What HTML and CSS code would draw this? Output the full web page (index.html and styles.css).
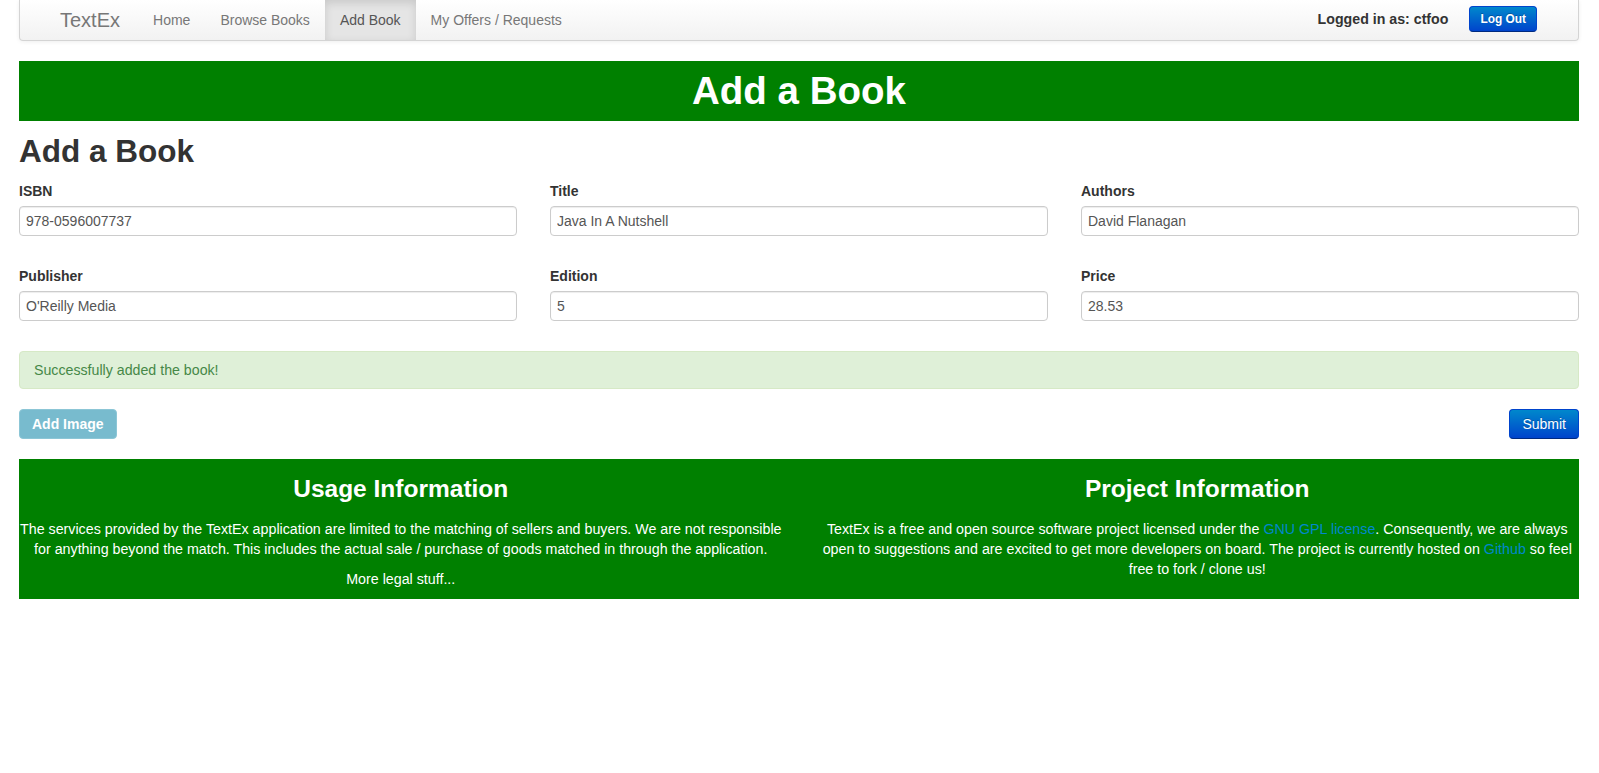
FILE: index.html
```html
<!DOCTYPE html>
<html lang="en">
<head>
<meta charset="utf-8">
<title>TextEx - Add Book</title>
<link rel="stylesheet" href="styles.css">
</head>
<body>
<div class="page">
  <nav class="navbar">
    <a class="brand" href="#">TextEx</a>
    <ul class="nav">
      <li><a href="#">Home</a></li>
      <li><a href="#">Browse Books</a></li>
      <li class="active"><a href="#">Add Book</a></li>
      <li><a href="#">My Offers / Requests</a></li>
    </ul>
    <div class="nav-right">
      <span class="user">Logged in as: ctfoo</span>
      <button class="btn btn-primary btn-small">Log Out</button>
    </div>
  </nav>

  <div class="banner"><h1>Add a Book</h1></div>

  <h2 class="page-title">Add a Book</h2>

  <form class="book-form">
    <div class="field">
      <label>ISBN</label>
      <input class="input" type="text" value="978-0596007737">
    </div>
    <div class="field">
      <label>Title</label>
      <input class="input" type="text" value="Java In A Nutshell">
    </div>
    <div class="field">
      <label>Authors</label>
      <input class="input" type="text" value="David Flanagan">
    </div>
    <div class="field">
      <label>Publisher</label>
      <input class="input" type="text" value="O'Reilly Media">
    </div>
    <div class="field">
      <label>Edition</label>
      <input class="input" type="text" value="5">
    </div>
    <div class="field">
      <label>Price</label>
      <input class="input" type="text" value="28.53">
    </div>
  </form>

  <div class="alert">Successfully added the book!</div>

  <div class="actions">
    <button class="btn btn-info disabled">Add Image</button>
    <button class="btn btn-primary">Submit</button>
  </div>

  <footer class="footer">
    <div class="footer-col">
      <h3>Usage Information</h3>
      <p>The services provided by the TextEx application are limited to the matching of sellers and buyers. We are not responsible for anything beyond the match. This includes the actual sale / purchase of goods matched in through the application.</p>
      <p>More legal stuff...</p>
    </div>
    <div class="footer-col">
      <h3>Project Information</h3>
      <p>TextEx is a free and open source software project licensed under the <a href="#">GNU GPL license</a>. Consequently, we are always open to suggestions and are excited to get more developers on board. The project is currently hosted on <a href="#">Github</a> so feel free to fork / clone us!</p>
    </div>
  </footer>
</div>
</body>
</html>
```

FILE: styles.css
```css
* { box-sizing: border-box; }

html, body {
  margin: 0;
  padding: 0;
  background: #ffffff;
}

body {
  font-family: "Liberation Sans", Arial, Helvetica, sans-serif;
  font-size: 14px;
  line-height: 20px;
  color: #333333;
}

.page {
  padding: 0 20px 0 19px;
}

/* Navbar */
.navbar {
  display: flex;
  align-items: flex-start;
  height: 41px;
  padding: 0 41px 0 21px;
  background-image: linear-gradient(to bottom, #ffffff, #f2f2f2);
  border: 1px solid #d4d4d4;
  border-top: none;
  border-radius: 0 0 4px 4px;
  box-shadow: 0 1px 4px rgba(0, 0, 0, 0.065);
  margin-bottom: 20px;
}

.brand {
  display: block;
  padding: 10px 18px 10px 19px;
  font-size: 20px;
  line-height: 20px;
  color: #777777;
  text-decoration: none;
}

.nav {
  display: flex;
  list-style: none;
  margin: 0;
  padding: 0;
}

.nav li a {
  display: block;
  padding: 10px 15px;
  line-height: 20px;
  color: #777777;
  text-decoration: none;
}

.nav li.active a {
  background-color: #e5e5e5;
  color: #555555;
  box-shadow: inset 0 3px 8px rgba(0, 0, 0, 0.125);
}

.nav-right {
  margin-left: auto;
  display: flex;
  align-items: center;
  gap: 21px;
  height: 34px;
}

.user {
  font-weight: bold;
  font-size: 14.2px;
  color: #333333;
  padding-top: 3px;
}

/* Buttons */
.btn {
  display: inline-block;
  padding: 4px 12px;
  font-family: inherit;
  font-size: 14px;
  line-height: 20px;
  color: #ffffff;
  border: 1px solid rgba(0, 0, 0, 0.1);
  border-bottom-color: rgba(0, 0, 0, 0.25);
  border-radius: 4px;
  cursor: pointer;
  text-shadow: 0 -1px 0 rgba(0, 0, 0, 0.25);
}

.btn-primary {
  background-color: #006dcc;
  background-image: linear-gradient(to bottom, #0088cc, #0044cc);
  border-color: #0044cc #0044cc #002a80;
}

.btn-small {
  padding: 2px 10px;
  font-size: 11.9px;
  font-weight: bold;
  line-height: 20px;
  margin-top: 4px;
}

.btn-info.disabled {
  background-color: #78bbce;
  border-color: #8cc6d6;
  font-weight: bold;
  text-shadow: none;
  cursor: default;
}

/* Banner */
.banner {
  background-color: #008000;
  padding: 10px 0;
  text-align: center;
}

.banner h1 {
  margin: 0;
  font-size: 38.5px;
  line-height: 40px;
  font-weight: bold;
  color: #ffffff;
}

.page-title {
  margin: 10px 0;
  font-size: 31.5px;
  line-height: 40px;
  font-weight: bold;
  color: #333333;
}

/* Form */
.book-form {
  display: grid;
  grid-template-columns: repeat(3, 1fr);
  column-gap: 33px;
  row-gap: 30px;
  margin: 0 0 30px;
}

.field label {
  display: block;
  margin-bottom: 5px;
  font-weight: bold;
  color: #333333;
}

.input {
  display: block;
  width: 100%;
  height: 30px;
  padding: 4px 6px;
  font-family: inherit;
  font-size: 14px;
  line-height: 20px;
  color: #555555;
  background: #ffffff;
  border: 1px solid #cccccc;
  border-radius: 4px;
  box-shadow: inset 0 1px 1px rgba(0, 0, 0, 0.075);
}

/* Alert */
.alert {
  padding: 8px 35px 8px 14px;
  margin-bottom: 20px;
  color: #468847;
  background-color: #dff0d8;
  border: 1px solid #d6e9c6;
  border-radius: 4px;
  font-size: 14.2px;
}

.actions {
  display: flex;
  justify-content: space-between;
  margin-bottom: 20px;
}

/* Footer */
.footer {
  display: grid;
  grid-template-columns: 1fr 1fr;
  column-gap: 33px;
  background-color: #008000;
  color: #ffffff;
  text-align: center;
}

.footer-col h3 {
  margin: 10px 0;
  font-size: 24.5px;
  line-height: 40px;
  font-weight: bold;
}

.footer-col p {
  margin: 0 0 10px;
  font-size: 14.25px;
}

.footer-col a {
  color: #0088cc;
  text-decoration: none;
}
```
